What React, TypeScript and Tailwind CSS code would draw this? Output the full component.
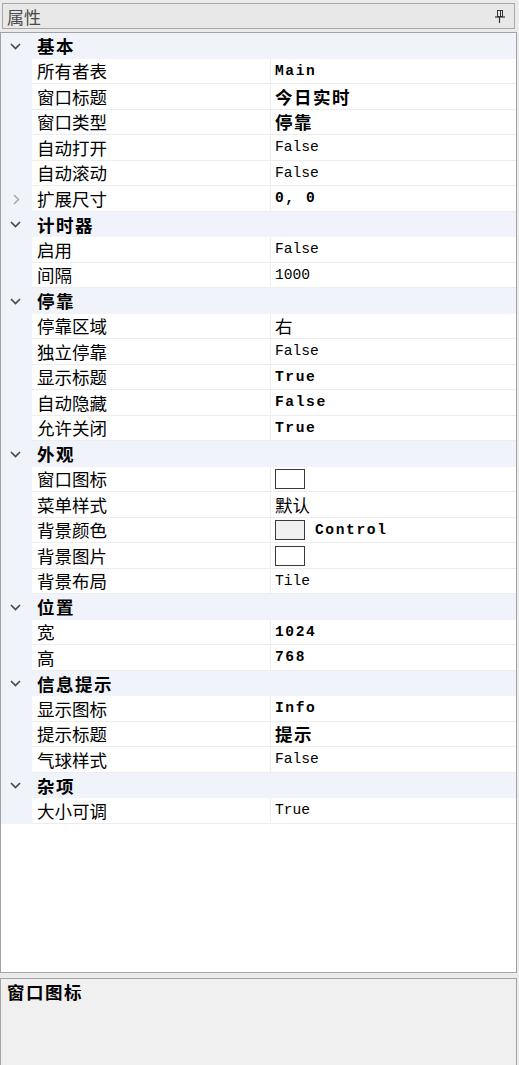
import React from "react";

type Val = { t?: string; b?: boolean; swatch?: string };
type Item = { name: string; v: Val; expand?: boolean };
type Group = { title: string; items: Item[] };

const groups: Group[] = [
  {
    title: "基本",
    items: [
      { name: "所有者表", v: { t: "Main", b: true } },
      { name: "窗口标题", v: { t: "今日实时", b: true } },
      { name: "窗口类型", v: { t: "停靠", b: true } },
      { name: "自动打开", v: { t: "False" } },
      { name: "自动滚动", v: { t: "False" } },
      { name: "扩展尺寸", v: { t: "0, 0", b: true }, expand: true },
    ],
  },
  {
    title: "计时器",
    items: [
      { name: "启用", v: { t: "False" } },
      { name: "间隔", v: { t: "1000" } },
    ],
  },
  {
    title: "停靠",
    items: [
      { name: "停靠区域", v: { t: "右" } },
      { name: "独立停靠", v: { t: "False" } },
      { name: "显示标题", v: { t: "True", b: true } },
      { name: "自动隐藏", v: { t: "False", b: true } },
      { name: "允许关闭", v: { t: "True", b: true } },
    ],
  },
  {
    title: "外观",
    items: [
      { name: "窗口图标", v: { swatch: "white" } },
      { name: "菜单样式", v: { t: "默认" } },
      { name: "背景颜色", v: { swatch: "control", t: "Control", b: true } },
      { name: "背景图片", v: { swatch: "white" } },
      { name: "背景布局", v: { t: "Tile" } },
    ],
  },
  {
    title: "位置",
    items: [
      { name: "宽", v: { t: "1024", b: true } },
      { name: "高", v: { t: "768", b: true } },
    ],
  },
  {
    title: "信息提示",
    items: [
      { name: "显示图标", v: { t: "Info", b: true } },
      { name: "提示标题", v: { t: "提示", b: true } },
      { name: "气球样式", v: { t: "False" } },
    ],
  },
  {
    title: "杂项",
    items: [{ name: "大小可调", v: { t: "True" } }],
  },
];

const cjk = "font-['Noto_Sans_CJK_SC',sans-serif]";
const mono = "font-['Liberation_Mono','Noto_Sans_CJK_SC',monospace]";

// rows alternate 26/25 so the list lands on the same lines as the original
const rowH = (i: number) => (i % 2 === 0 ? "h-[26px]" : "h-[25px]");

function ValueText({ v }: { v: Val }) {
  if (!v.t) return null;
  const isCjk = /[\u4e00-\u9fff]/.test(v.t);
  if (isCjk) {
    return (
      <span className={`${cjk} text-[17.5px] leading-none ${v.b ? "font-bold tracking-[1.5px]" : ""}`}>
        {v.t}
      </span>
    );
  }
  return (
    <span className={`${mono} text-[14.6px] leading-none whitespace-pre ${v.b ? "font-bold tracking-[1.6px]" : ""}`}>
      {v.t}
    </span>
  );
}

function Chevron({ open }: { open: boolean }) {
  return open ? (
    <svg width="11" height="7" viewBox="0 0 11 7" className="text-[#4a4a4a]">
      <path d="M1 1 L5.5 5.5 L10 1" fill="none" stroke="currentColor" strokeWidth="1.7" />
    </svg>
  ) : (
    <svg width="7" height="11" viewBox="0 0 7 11" className="text-[#a8a8a8] ml-[2px]">
      <path d="M1 1 L5.5 5.5 L1 10" fill="none" stroke="currentColor" strokeWidth="1.5" />
    </svg>
  );
}

function PropRow({ item, idx }: { item: Item; idx: number }) {
  return (
    <div className={`flex shrink-0 ${rowH(idx)}`}>
      <div className="w-[31px] shrink-0 bg-[#f0f3f9] flex items-center pl-[10px]">
        {item.expand && <Chevron open={false} />}
      </div>
      <div className="w-[238px] shrink-0 bg-white border-b border-[#ededed] flex items-center pl-[5px]">
        <span className={`${cjk} text-[17.5px] leading-none text-black`}>{item.name}</span>
      </div>
      <div className="flex-1 bg-white border-b border-l border-[#ededed] flex items-center pl-[4px] text-black">
        {item.v.swatch && (
          <span
            className={`w-[30px] h-[20px] border border-[#3a3a3a] shrink-0 ${
              item.v.swatch === "control" ? "bg-[#f0f0f0] mr-[10px]" : "bg-white"
            }`}
          />
        )}
        <ValueText v={item.v} />
      </div>
    </div>
  );
}

export default function App() {
  let idx = 0;
  return (
    <div className="w-[519px] h-[1065px] bg-[#ebebeb] flex flex-col overflow-hidden">
      {/* title bar */}
      <div className="h-[32px] shrink-0 pl-[2px] pr-[4px] pt-[3px] pb-[3px]">
        <div className="h-full border border-[#a8a8a8] bg-[#e8e8e8] flex items-center justify-between pl-[4px] pr-[8px]">
          <span className={`${cjk} text-[17px] leading-none text-[#4a4a4a]`}>属性</span>
          <svg width="11" height="13" viewBox="0 0 11 13" className="text-[#333]">
            <rect x="2.5" y="0.5" width="5" height="6" fill="none" stroke="currentColor" />
            <line x1="5.5" y1="1" x2="5.5" y2="6" stroke="currentColor" strokeWidth="1" />
            <line x1="0" y1="7" x2="10" y2="7" stroke="currentColor" strokeWidth="1.2" />
            <line x1="4.5" y1="7" x2="4.5" y2="13" stroke="currentColor" strokeWidth="1.2" />
          </svg>
        </div>
      </div>

      {/* property grid */}
      <div className="flex-1 min-h-0 mr-[2px] border border-[#a3a3a3] bg-white flex flex-col">
        {groups.map((g) => {
          const headIdx = idx++;
          return (
            <div key={g.title} className="flex flex-col shrink-0">
              <div className={`flex shrink-0 bg-[#f0f3f9] ${rowH(headIdx)}`}>
                <div className="w-[31px] shrink-0 flex items-center pl-[9px]">
                  <Chevron open />
                </div>
                <div className="flex items-center pl-[5px]">
                  <span className={`${cjk} text-[17.5px] leading-none font-bold tracking-[1.5px] text-black`}>
                    {g.title}
                  </span>
                </div>
              </div>
              {g.items.map((it) => (
                <PropRow key={it.name} item={it} idx={idx++} />
              ))}
            </div>
          );
        })}
      </div>

      {/* description */}
      <div className="h-[87px] shrink-0 mt-[5px] mr-[2px] border border-b-0 border-[#a3a3a3] bg-[#f0f0f0] pl-[6px] pt-[2px]">
        <span className={`${cjk} text-[17.5px] leading-none font-bold tracking-[1.5px] text-black`}>窗口图标</span>
      </div>
    </div>
  );
}
